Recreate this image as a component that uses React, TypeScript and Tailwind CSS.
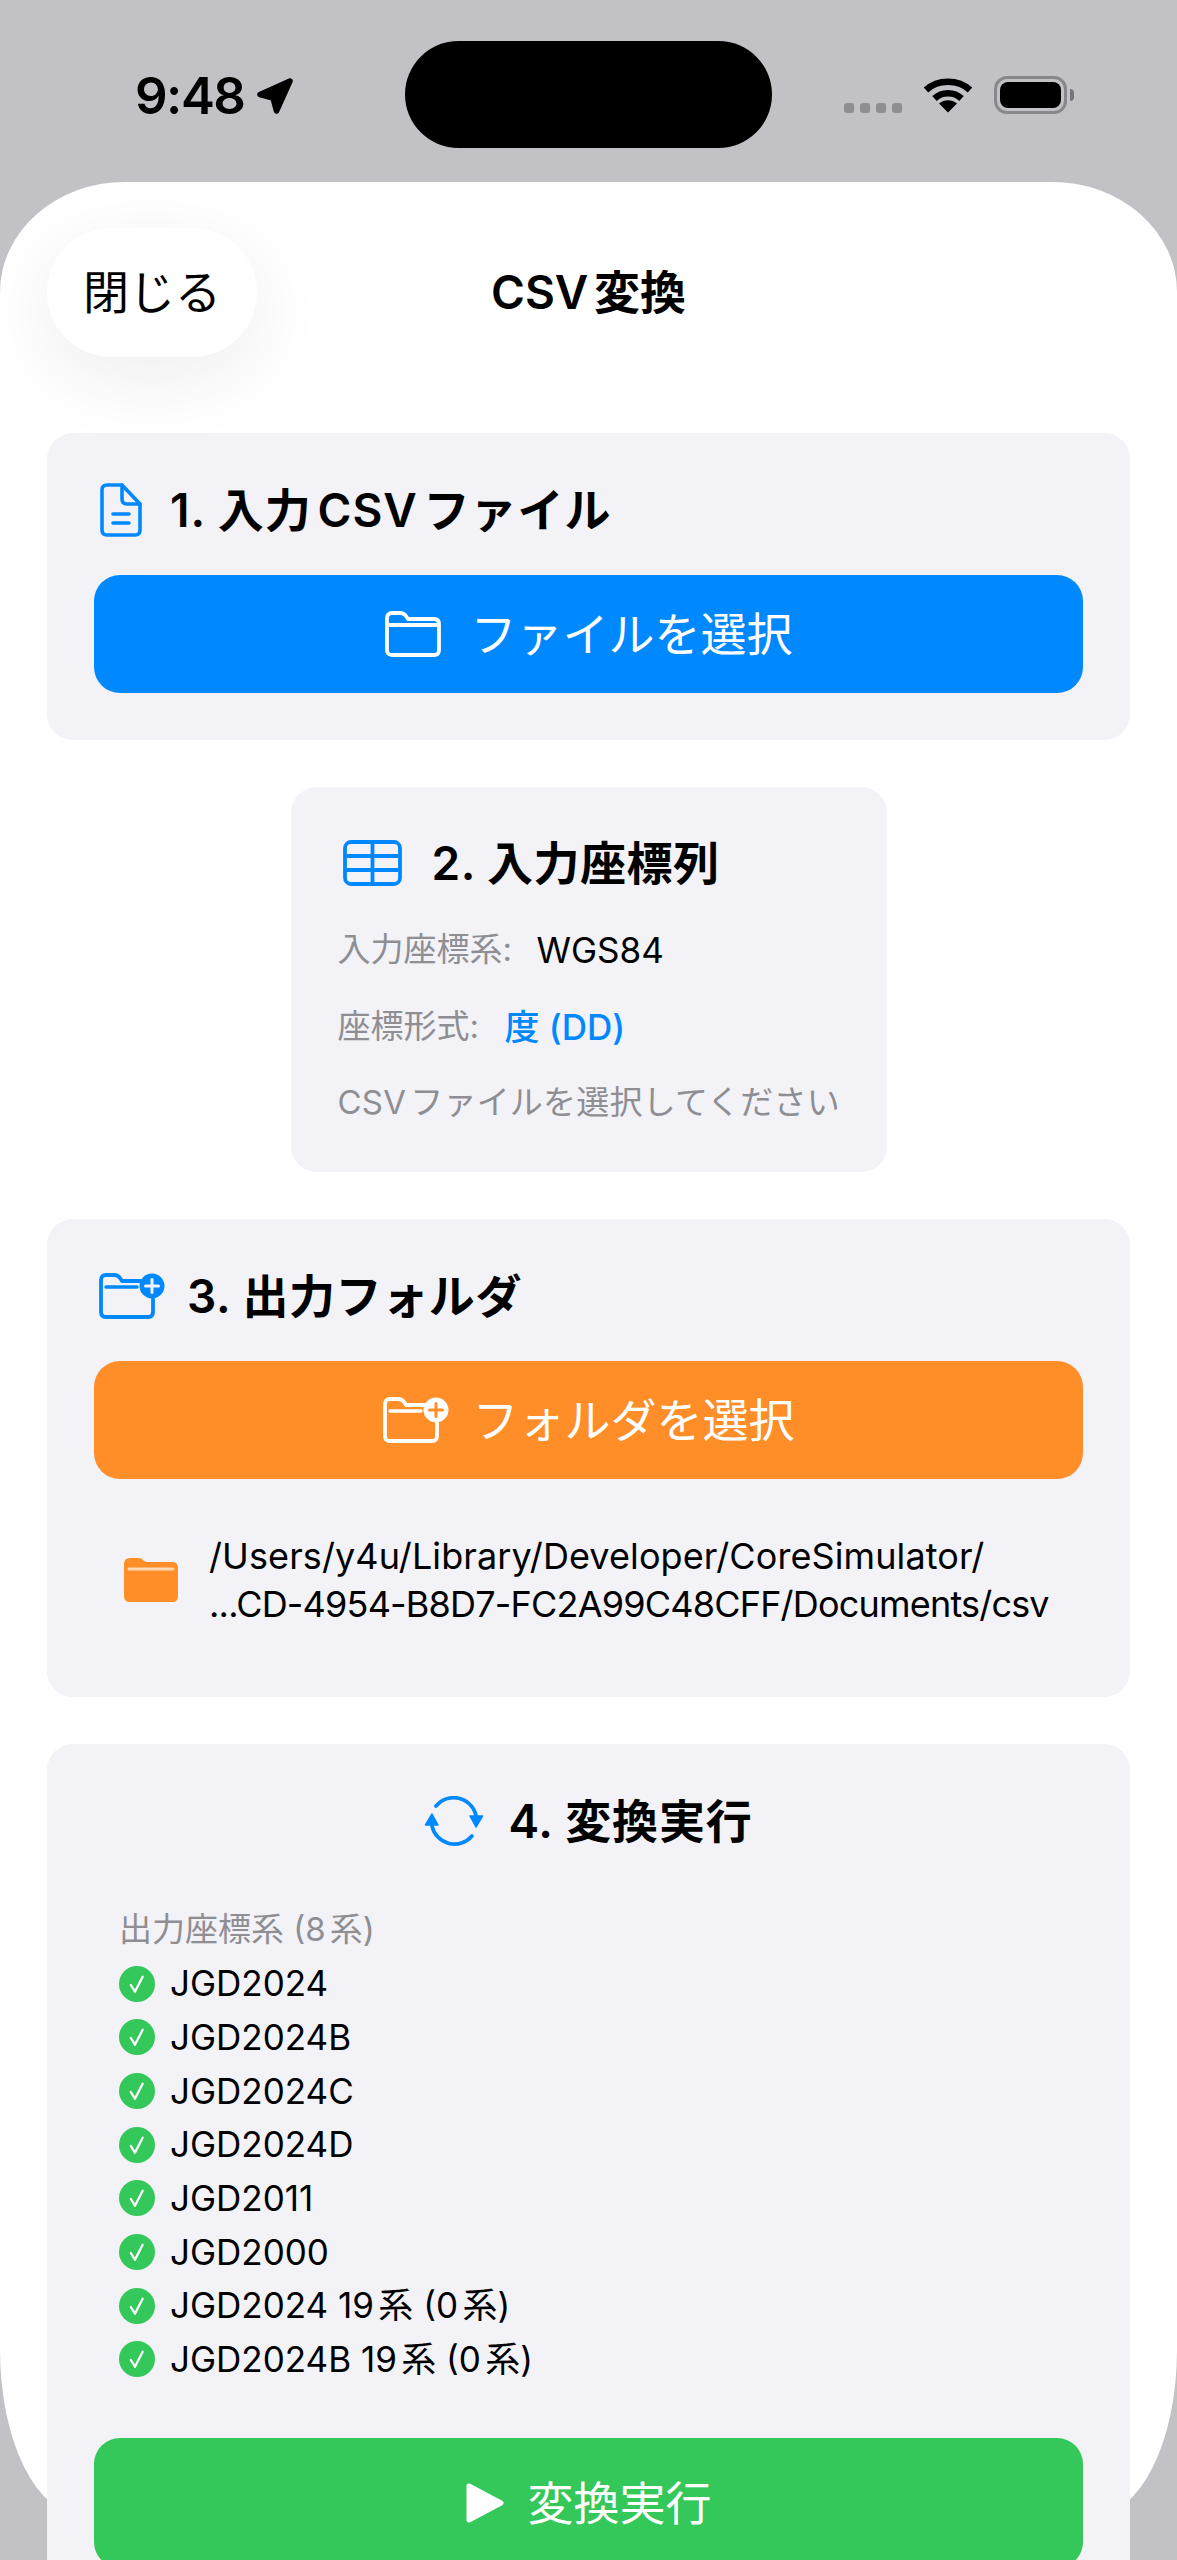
import React from "react";

const BLUE = "#0088ff";

function DocIcon() {
  return (
    <svg width="42" height="54" viewBox="0 0 42 54" fill="none" stroke={BLUE} strokeWidth="3.6" strokeLinejoin="round" strokeLinecap="round">
      <path d="M7 2H22L40 21V47Q40 52 35 52H7Q2 52 2 47V7Q2 2 7 2Z" />
      <path d="M22 2V16Q22 21 27 21H40" />
      <path d="M13 31H29M13 40H29" />
    </svg>
  );
}

function FolderIcon({ color }: { color: string }) {
  return (
    <svg width="56" height="46" viewBox="0 0 56 46" fill="none" stroke={color} strokeWidth="3.8" strokeLinejoin="round" strokeLinecap="round">
      <path d="M2 7Q2 2 7 2H15Q19 2 21 5L23 8H49Q54 8 54 13V39Q54 44 49 44H7Q2 44 2 39Z" />
      <path d="M5 14H51" />
    </svg>
  );
}

function FolderPlusIcon({ color, badge, plus }: { color: string; badge: string; plus: string }) {
  return (
    <svg width="66" height="46" viewBox="0 0 66 46" fill="none">
      <path d="M42 8H23L21 5Q19 2 15 2H7Q2 2 2 7V39Q2 44 7 44H49Q54 44 54 39V26" stroke={color} strokeWidth="3.8" strokeLinejoin="round" strokeLinecap="round" />
      <path d="M7 14H38" stroke={color} strokeWidth="3.4" strokeLinecap="round" />
      <circle cx="53" cy="13" r="12.5" fill={badge} />
      <path d="M53 6.5V19.5M46.5 13H59.5" stroke={plus} strokeWidth="3" strokeLinecap="round" />
    </svg>
  );
}

function FolderFill() {
  return (
    <svg width="56" height="46" viewBox="0 0 56 46">
      <path d="M1 7Q1 1 7 1H15Q19 1 21 4L23 5H49Q55 5 55 11V39Q55 45 49 45H7Q1 45 1 39Z" fill="#ff8d28" />
      <path d="M6 12H50" stroke="#ffd9b8" strokeWidth="3" strokeLinecap="round" />
    </svg>
  );
}

function TableIcon() {
  return (
    <svg width="59" height="46" viewBox="0 0 59 46" fill="none" stroke={BLUE} strokeWidth="3.8" strokeLinejoin="round">
      <rect x="2" y="2" width="55" height="42" rx="6" />
      <path d="M2 16H57M2 30H57M29.5 2V44" />
    </svg>
  );
}

function SyncIcon() {
  return (
    <svg width="60" height="50" viewBox="0 0 60 50" fill="none">
      <path d="M12 10A23 23 0 0 1 52 19" stroke={BLUE} strokeWidth="3.6" strokeLinecap="round" />
      <path d="M48 40A23 23 0 0 1 8 30" stroke={BLUE} strokeWidth="3.6" strokeLinecap="round" />
      <path d="M46 20H58.5L52 31Z" fill={BLUE} stroke={BLUE} strokeWidth="1.5" strokeLinejoin="round" />
      <path d="M1.5 29H14L8 18Z" fill={BLUE} stroke={BLUE} strokeWidth="1.5" strokeLinejoin="round" />
    </svg>
  );
}

function CheckIcon() {
  return (
    <svg width="36" height="36" viewBox="0 0 35 35" className="shrink-0">
      <circle cx="17.5" cy="17.5" r="17.5" fill="#34c759" />
      <path d="M11.5 18.5L15.5 25L23 10.5" fill="none" stroke="#fff" strokeWidth="2.2" strokeLinecap="round" strokeLinejoin="round" />
    </svg>
  );
}

function PlayIcon() {
  return (
    <svg width="38" height="42" viewBox="0 0 38 42">
      <path d="M3 4L35 21L3 38Z" fill="#fff" stroke="#fff" strokeWidth="5" strokeLinejoin="round" />
    </svg>
  );
}

function LocationIcon() {
  return (
    <svg width="38" height="38" viewBox="0 0 38 38">
      <path d="M34 4L4 17.5L17 21L20.5 34Z" fill="#000" stroke="#000" strokeWidth="5.5" strokeLinejoin="round" />
    </svg>
  );
}

function WifiIcon() {
  return (
    <svg width="50" height="37" viewBox="0 0 50 37" fill="none">
      <path d="M3 14C15 3 35 3 47 14" stroke="#000" strokeWidth="6.5" strokeLinecap="butt" />
      <path d="M11.5 22.5C19 15.5 31 15.5 38.5 22.5" stroke="#000" strokeWidth="6.5" />
      <path d="M16 27.5C21 23 29 23 34 27.5L25 36.5Z" fill="#000" />
    </svg>
  );
}

function Battery() {
  return (
    <div className="flex items-center gap-[3px]">
      <div className="w-[73px] h-[38px] rounded-[13px] border-[3px] border-[#88888c] p-[3px]">
        <div className="w-full h-full rounded-[8px] bg-black" />
      </div>
      <div className="w-[4px] h-[12px] rounded-r-full bg-[#77777b]" />
    </div>
  );
}

function ActionButton({ bg, icon, label, gap, h }: { bg: string; icon: React.ReactNode; label: string; gap: string; h: string }) {
  return (
    <div className={`${bg} ${h} ${gap} w-full shrink-0 rounded-[26px] flex items-center justify-center text-white text-[46px]`}>
      {icon}
      <span>{label}</span>
    </div>
  );
}

const systems = ["JGD2024", "JGD2024B", "JGD2024C", "JGD2024D", "JGD2011", "JGD2000", "JGD2024 19系 (0系)", "JGD2024B 19系 (0系)"];

export default function App() {
  return (
    <div className="w-[1177px] h-[2560px] overflow-hidden bg-[#c2c1c6] text-black [font-family:Inter,'Noto_Sans_CJK_JP',sans-serif] [text-autospace:normal]">
      <div className="h-[182px] flex pl-[135px] pt-[41px]">
        <div className="w-[270px] h-[107px] flex items-start gap-[11px] pt-[36px]">
          <span className="text-[51px] leading-[38px] font-semibold tracking-[-1.5px]">9:48</span>
          <LocationIcon />
        </div>
        <div className="w-[367px] h-[107px] rounded-[54px] bg-black" />
        <div className="flex items-start gap-[21px] pt-[35px] ml-[72px]">
          <div className="flex gap-[6px] mt-[27px]">
            <div className="w-[10px] h-[10px] rounded-[3px] bg-[#8f8f93]" />
            <div className="w-[10px] h-[10px] rounded-[3px] bg-[#8f8f93]" />
            <div className="w-[10px] h-[10px] rounded-[3px] bg-[#8f8f93]" />
            <div className="w-[10px] h-[10px] rounded-[3px] bg-[#8f8f93]" />
          </div>
          <WifiIcon />
          <Battery />
        </div>
      </div>

      <div className="h-[2333px] bg-white rounded-t-[125px_110px] rounded-b-[82px_165px] px-[47px] pt-[46px]">
        <div className="grid grid-cols-[1fr_auto_1fr] items-center h-[129px] mb-[76px]">
          <div className="w-[210px] h-[129px] rounded-full bg-white shadow-[0_20px_80px_rgba(0,0,0,0.07)] flex items-center justify-center text-[46px]">閉じる</div>
          <div className="text-[46px] font-semibold">CSV変換</div>
          <div />
        </div>

        <div className="flex flex-col gap-[47px] items-center">
          <section className="w-full bg-[#f2f2f7] rounded-[26px] p-[47px]">
            <div className="h-[60px] mb-[35px] ml-[6px] flex items-center gap-[28px] text-[46px] font-semibold">
              <DocIcon />
              <span className="tracking-[1px]">1. 入力CSVファイル</span>
            </div>
            <ActionButton bg="bg-[#0088ff]" h="h-[118px]" gap="gap-[30px]" icon={<FolderIcon color="#fff" />} label="ファイルを選択" />
          </section>

          <section className="w-[596px] bg-[#f2f2f7] rounded-[26px] px-[47px] pt-[47px] pb-[44px]">
            <div className="h-[58px] mb-[33px] ml-[5px] flex items-center gap-[30px] text-[46px] font-semibold">
              <TableIcon />
              <span className="tracking-[0.5px]">2. 入力座標列</span>
            </div>
            <div className="h-[50px] mb-[27px] flex items-center">
              <span className="text-[#8e8e93] text-[33px] w-[199px]">入力座標系:</span>
              <span className="text-[35px]">WGS84</span>
            </div>
            <div className="h-[50px] mb-[26px] flex items-center">
              <span className="text-[#8e8e93] text-[33px] w-[167px]">座標形式:</span>
              <span className="text-[#0088ff] text-[35px] font-medium">度 (DD)</span>
            </div>
            <div className="h-[50px] flex items-center text-[33px] tracking-[0.2px] text-[#8e8e93] whitespace-nowrap">CSVファイルを選択してください</div>
          </section>

          <section className="w-full bg-[#f2f2f7] rounded-[26px] p-[47px] pb-[69px]">
            <div className="h-[60px] mb-[35px] ml-[5px] flex items-center gap-[22px] text-[46px] font-semibold">
              <FolderPlusIcon color="#0088ff" badge="#0088ff" plus="#f2f2f7" />
              <span className="tracking-[0.6px]">3. 出力フォルダ</span>
            </div>
            <ActionButton bg="bg-[#ff8d28]" h="h-[118px]" gap="gap-[24px]" icon={<FolderPlusIcon color="#fff" badge="#fff" plus="#ff8d28" />} label="フォルダを選択" />
            <div className="mt-[53px] ml-[29px] flex items-center gap-[30px]">
              <FolderFill />
              <div className="text-[36px] leading-[48px] whitespace-nowrap">
                <div className="tracking-[0.1px]">/Users/y4u/Library/Developer/CoreSimulator/</div>
                <div className="tracking-[-0.8px]">...CD-4954-B8D7-FC2A99C48CFF/Documents/csv</div>
              </div>
            </div>
          </section>

          <section className="w-full bg-[#f2f2f7] rounded-[26px] p-[47px]">
            <div className="h-[60px] mb-[52px] flex items-center justify-center gap-[24px] text-[46px] font-semibold">
              <SyncIcon />
              <span className="tracking-[0.8px]">4. 変換実行</span>
            </div>
            <div className="ml-[25px] mb-[52px]">
              <div className="h-[53.7px] flex items-center text-[33px] text-[#8e8e93]">出力座標系 (8系)</div>
              {systems.map((s) => (
                <div key={s} className="h-[53.7px] flex items-center gap-[15px] text-[35px]">
                  <CheckIcon />
                  <span>{s}</span>
                </div>
              ))}
            </div>
            <ActionButton bg="bg-[#34c759]" h="h-[130px]" gap="gap-[24px]" icon={<PlayIcon />} label="変換実行" />
          </section>
        </div>
      </div>
    </div>
  );
}
